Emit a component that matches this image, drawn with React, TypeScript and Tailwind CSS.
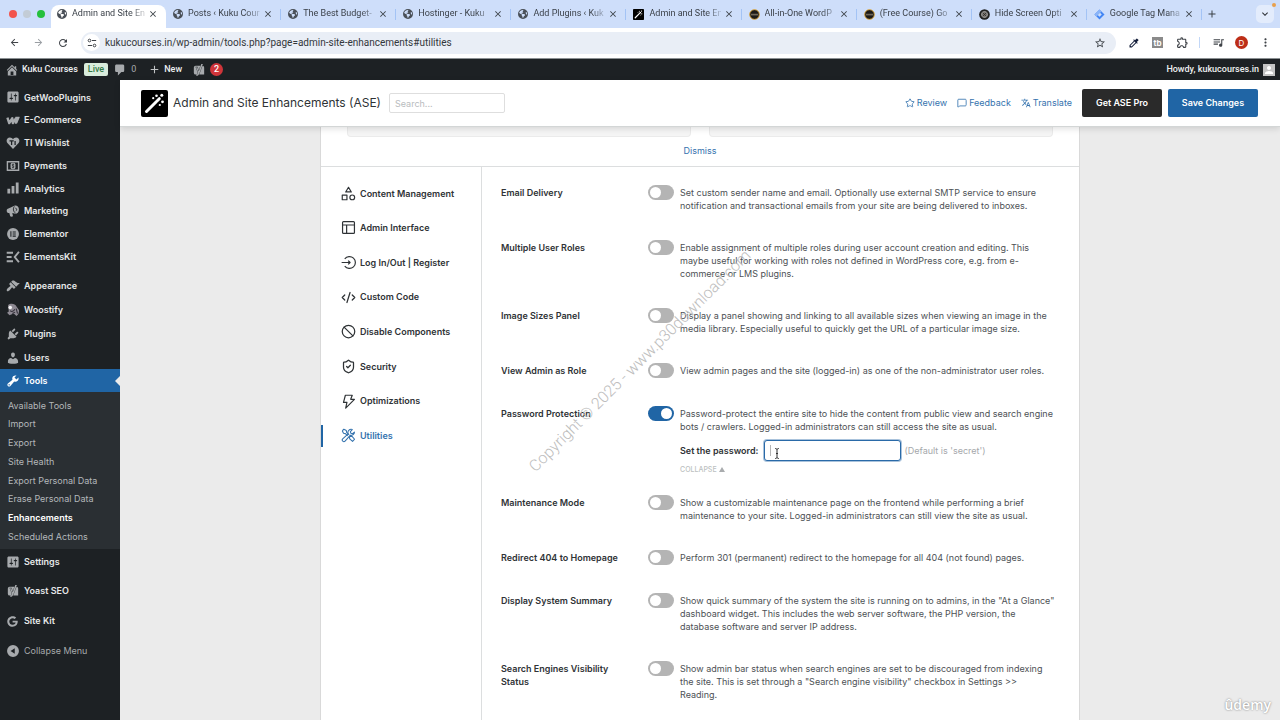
import type { ReactNode } from 'react';
import {
  MdAdd,
  MdArrowBack,
  MdArrowForward,
  MdClose,
  MdColorize,
  MdExpandMore,
  MdMoreVert,
  MdOutlineExtension,
  MdPerson,
  MdQueueMusic,
  MdRefresh,
  MdStarBorder,
  MdTranslate,
} from 'react-icons/md';
import { FaEarthAmericas, FaGoogle } from 'react-icons/fa6';
import { SiYoast } from 'react-icons/si';
import { Ban, CodeXml, MessageSquare, ShieldCheck, Star } from 'lucide-react';

/* ---------- drawings ---------- */

function Dash({ d, children }: { d?: string; children?: ReactNode }) {
  return (
    <svg viewBox="0 0 20 20" className="size-[14px] shrink-0" fill="currentColor" aria-hidden="true">
      {d ? <path d={d} fillRule="evenodd" /> : null}
      {children}
    </svg>
  );
}

const SLIDERS =
  'M18 16V4c0-1.1-.9-2-2-2H4c-1.1 0-2 .9-2 2v12c0 1.1.9 2 2 2h12c1.1 0 2-.9 2-2zM8 11h1c.55 0 1 .45 1 1s-.45 1-1 1H8v1.5c0 .28-.22.5-.5.5s-.5-.22-.5-.5V13H6c-.55 0-1-.45-1-1s.45-1 1-1h1V5.500c0-.28.22-.5.5-.5s.5.22.5.5V11zm5-2h-1c-.55 0-1-.45-1-1s.45-1 1-1h1V5.500c0-.28.22-.5.5-.5s.5.22.5.5V7h1c.55 0 1 .45 1 1s-.45 1-1 1h-1v5.500c0 .28-.22.5-.5.5s-.5-.22-.5-.5V9z';
const HOME =
  'M16 8.5l1.53 1.53-1.06 1.06L10 4.6l-6.47 6.49-1.06-1.06L10 2.5l4 4v-2h2v4zm-6-2.46l6 5.99V18H4v-5.97zM12 17v-5H8v5h4z';
const COMMENT = 'M5 2h9c1.1 0 2 .9 2 2v7c0 1.1-.9 2-2 2h-2l-5 5v-5H5c-1.1 0-2-.9-2-2V4c0-1.1.9-2 2-2z';
const BRUSH =
  'M14.48 11.06L7.41 3.99l1.5-1.5c.5-.56 2.3-.47 3.51.32 1.21.8 1.43 1.28 2.91 2.1 1.18.64 2.45 1.26 4.45.85zm-.71.71L6.7 4.7 4.93 6.47c-.39.39-.39 1.02 0 1.41l1.06 1.06c.39.39.39 1.03 0 1.42-.6.6-1.43 1.11-2.21 1.69-.35.26-.7.53-1.01.84C1.43 14.23.4 16.08 1.4 17.07c.99 1 2.84-.03 4.18-1.36.31-.31.58-.66.85-1.02.57-.78 1.08-1.61 1.69-2.21.39-.39 1.02-.39 1.41 0l1.06 1.06c.39.39 1.02.39 1.41 0z';
const PLUG =
  'M13.11 4.36L9.87 7.6 8 5.73l3.24-3.24c.35-.34 1.05-.2 1.56.32.52.51.66 1.21.31 1.55zm-8 1.77l.91-1.12 9.01 9.01-1.19.84c-.71.71-2.63 1.16-3.82 1.16H6.14L4.9 17.26c-.59.59-1.54.59-2.12 0-.59-.58-.59-1.53 0-2.12l1.24-1.24v-3.88c0-1.13.4-3.19 1.09-3.89zm7.26 3.97l3.24-3.24c.34-.35 1.04-.21 1.55.31.52.51.66 1.21.31 1.55l-3.24 3.25z';
const USER =
  'M10 9.25c-2.27 0-2.73-3.44-2.73-3.44C7 4.02 7.82 2 9.97 2c2.16 0 2.98 2.02 2.71 3.81 0 0-.41 3.44-2.68 3.44zm0 2.57L12.72 10c2.39 0 4.52 2.33 4.52 4.53v2.49s-3.65 1.13-7.24 1.13c-3.65 0-7.24-1.13-7.24-1.13v-2.49c0-2.25 1.94-4.48 4.47-4.48z';
const WRENCH =
  'M16.68 9.77c-1.34 1.34-3.3 1.67-4.95.99l-5.41 6.52c-.99.99-2.59.99-3.58 0s-.99-2.59 0-3.57l6.52-5.42c-.68-1.65-.35-3.61.99-4.95 1.28-1.28 3.12-1.62 4.72-1.06l-2.89 2.89 2.82 2.82 2.86-2.87c.53 1.58.18 3.39-1.08 4.65zM3.81 16.21c.4.39 1.04.39 1.43 0 .4-.4.4-1.04 0-1.43-.39-.4-1.03-.4-1.43 0-.39.39-.39 1.03 0 1.43z';

const wooIcon = (
  <Dash>
    <path
      d="M2 6.5l2.6 8 4.4-7 .8 7 4.7-7.6"
      fill="none"
      stroke="currentColor"
      strokeWidth="3.4"
      strokeLinejoin="round"
    />
    <path d="M13.5 5.2h5.3c.7 0 1 .5.7 1.1l-3.2 8c-.3.6-.8.9-1.4.9h-2.4z" />
  </Dash>
);
const wishIcon = (
  <Dash>
    <path d="M10 18.5L2 10C-.5 6.500 1.500 2 5.500 2 7.500 2 9 3 10 4.500 11 3 12.500 2 14.500 2c4 0 6 4.500 3.500 8z" />
    <path d="M5 7h6M8 7v6M13 7v6" stroke="#1d2124" strokeWidth="1.800" />
  </Dash>
);
const payIcon = (
  <Dash>
    <path d="M1 3h18v14H1zM3 5v10h14V5z" fillRule="evenodd" />
    <rect x="6.500" y="5.500" width="7" height="9" rx="2.500" />
    <path d="M11.600 8c-2.500-1.200-4 .8-1.600 1.800s1.500 3.200-1.500 2M10 6.500v7" stroke="#1d2124" fill="none" />
  </Dash>
);
const barsIcon = (
  <Dash>
    <path d="M2 11h4v7H2zM8 7h4v11H8zM14 2h4v16h-4z" />
  </Dash>
);
const hornIcon = (
  <Dash>
    <path d="M1 9.500C1 8 2 7 3.500 6.600L12 2.500c3-1 6.500 1.500 6.500 5.500s-2.500 6-5 6L9 13l1 4.500c-1.500 1-3 .8-4 0L4.700 12.800C2.500 13 1 11.500 1 9.500z" />
    <path
      d="M12 3.500c-2.500 3-1.500 7.500 1.500 9.500M13.500 6c2.200 0 2.200 3.500.5 3.800"
      fill="none"
      stroke="#1d2124"
      strokeWidth="1.300"
    />
  </Dash>
);
const elementorIcon = (
  <Dash>
    <circle cx="10" cy="10" r="8.500" />
    <path d="M7 6v8M9.500 7h4.500M9.500 10h4.500M9.500 13h4.500" stroke="#1d2124" strokeWidth="1.500" />
  </Dash>
);
const kitIcon = (
  <Dash>
    <path d="M1 4h9M1 10h7M1 16h9" stroke="currentColor" strokeWidth="2.800" />
    <path d="M18.500 2.500L12.500 10l6 7.500" fill="none" stroke="currentColor" strokeWidth="2.800" />
  </Dash>
);
const woostifyIcon = (
  <Dash>
    <path d="M3 3c4-3.500 10-2 12 2l3.500 5c.5 4-1 7-3.500 8.500L11 15 5 17.500 1.500 14 4 12z" fill="#8d8992" />
    <circle cx="6" cy="6.500" r="2.600" fill="#f4f4f6" />
    <path d="M6 11c2 2 5 1 6.500-2M9 15l4-2M14.500 8l2 7" stroke="#33303a" strokeWidth="1.500" fill="none" />
  </Dash>
);
const collapseIcon = (
  <Dash>
    <path d="M10 1.500a8.500 8.500 0 100 17 8.500 8.500 0 000-17zM12.500 6v8L6.500 10z" fillRule="evenodd" />
  </Dash>
);

function Wand({ className }: { className: string }) {
  return (
    <svg viewBox="0 0 27 27" className={className} aria-hidden="true">
      <rect width="27" height="27" rx="2" fill="#000" />
      <path d="M5.500 21.500L15.500 11.500" stroke="#fff" strokeWidth="3" strokeLinecap="round" />
      <path d="M16.500 10.500l1.800-1.800" stroke="#fff" strokeWidth="3" strokeLinecap="round" />
      <g fill="#fff">
        <circle cx="15.500" cy="5.700" r="1.300" />
        <circle cx="20.800" cy="5.200" r="1.500" />
        <circle cx="12.200" cy="8.200" r="1.100" />
        <circle cx="21.500" cy="11.800" r="1.400" />
        <circle cx="18.800" cy="15" r="1.100" />
      </g>
    </svg>
  );
}

function Outline({ children }: { children: ReactNode }) {
  return (
    <svg
      viewBox="0 0 24 24"
      className="size-[15px] shrink-0"
      fill="none"
      stroke="currentColor"
      strokeWidth="1.900"
      strokeLinejoin="round"
      aria-hidden="true"
    >
      {children}
    </svg>
  );
}

/* ---------- browser chrome ---------- */

const globe = <FaEarthAmericas className="size-[10px] shrink-0 text-[#4a5058]" />;
const badge = (
  <svg viewBox="0 0 12 12" className="size-[11px] shrink-0" aria-hidden="true">
    <circle cx="6" cy="6" r="5.300" fill="#1d1a17" stroke="#e0a83a" />
    <path d="M2 5.200h8v1.800H2z" fill="#6f675a" />
  </svg>
);
const target = (
  <svg viewBox="0 0 12 12" className="size-[11px] shrink-0" aria-hidden="true">
    <circle cx="6" cy="6" r="5.800" fill="#1f1f1f" />
    <circle cx="6" cy="6" r="3.300" fill="#77736f" stroke="#c9c9c9" strokeWidth=".7" />
    <path d="M4 4l4 4M8 4L4 8" stroke="#2a2a2a" strokeWidth=".9" />
  </svg>
);
const gtm = (
  <svg viewBox="0 0 12 12" className="size-[11px] shrink-0" aria-hidden="true">
    <path d="M6 .5L11.500 6 6 11.500.5 6z" fill="#4285f4" />
    <path d="M6 3.500L8.500 6 6 8.500 3.500 6z" fill="#cfe0fb" />
    <path d="M6 .5L.5 6l2.200 2.200L8.200 2.700z" fill="#8ab4f8" />
  </svg>
);

const TABS: { title: string; icon: ReactNode }[] = [
  { title: 'Admin and Site En', icon: globe },
  { title: 'Posts ‹ Kuku Cour', icon: globe },
  { title: 'The Best Budget-', icon: globe },
  { title: 'Hostinger - Kuku', icon: globe },
  { title: 'Add Plugins ‹ Kuk', icon: globe },
  { title: 'Admin and Site En', icon: <Wand className="size-[11px] shrink-0" /> },
  { title: 'All-in-One WordP', icon: badge },
  { title: '(Free Course) Go', icon: badge },
  { title: 'Hide Screen Opti', icon: target },
  { title: 'Google Tag Mana', icon: gtm },
];

function TabStrip() {
  return (
    <div className="flex h-7 items-center bg-[#cedefa]">
      <div className="flex w-[51px] shrink-0 items-center gap-[6px] pl-[9px]">
        <span className="size-2 rounded-full bg-[#f2544d]" />
        <span className="size-2 rounded-full bg-[#c3ccd6]" />
        <span className="size-2 rounded-full bg-[#25c03c]" />
      </div>
      <div className="flex h-full min-w-0 flex-1">
        {TABS.map((t, i) => (
          <div key={i} className="flex min-w-0 flex-1 flex-col pt-[5px]">
            <div
              className={
                i === 0
                  ? 'flex flex-1 items-center rounded-t-lg bg-white pr-2 pb-[5px] pl-[6px]'
                  : 'flex flex-1 items-center pb-[5px] pl-[7px]'
              }
            >
              {t.icon}
              <span className="ml-[5px] min-w-0 flex-1 overflow-hidden font-[Roboto,sans-serif] whitespace-nowrap text-[#3b4149] [mask-image:linear-gradient(to_right,#000_80%,rgba(0,0,0,0.2))]">
                {t.title}
              </span>
              <button type="button" aria-label="Close tab" className="ml-[3px] text-[#3b4046]">
                <MdClose className="size-[10px]" />
              </button>
              {i > 0 ? <span className="ml-[7px] h-[11px] w-px bg-[#a3c3f5]" /> : null}
            </div>
          </div>
        ))}
      </div>
      <button type="button" aria-label="New tab" className="ml-1 text-[#3b4046]">
        <MdAdd className="size-3" />
      </button>
      <button
        type="button"
        aria-label="Search tabs"
        className="relative mr-[6px] ml-[38px] flex size-[18px] items-center justify-center rounded-[5px] bg-[#e3ecfc] text-[#2f3338]"
      >
        <MdExpandMore className="size-3" />
        <span className="absolute -top-[2px] -right-[2px] size-1 rounded-full bg-[#e8a04c]" />
      </button>
    </div>
  );
}

function Toolbar() {
  return (
    <div className="flex h-[31px] items-center border-b border-[#8b9093] bg-white pb-px text-[#3f4348]">
      <button type="button" aria-label="Back" className="ml-[9px]">
        <MdArrowBack className="size-[11px]" />
      </button>
      <button type="button" aria-label="Forward" className="ml-[13px] text-[#9a9ea3]">
        <MdArrowForward className="size-[11px]" />
      </button>
      <button type="button" aria-label="Reload" className="ml-[13px]">
        <MdRefresh className="size-3" />
      </button>
      <div className="ml-3 flex h-[22px] min-w-0 flex-1 items-center rounded-full bg-[#e9eef6] pr-[10px] pl-[2px]">
        <span className="flex size-[17px] shrink-0 items-center justify-center rounded-full bg-white">
          <svg viewBox="0 0 12 12" className="size-[10px]" fill="none" stroke="currentColor" strokeWidth="1.200" aria-hidden="true">
            <circle cx="3" cy="3" r="1.600" />
            <path d="M6 3h5M1 9h5" />
            <circle cx="9" cy="9" r="1.600" />
          </svg>
        </span>
        <input
          type="text"
          aria-label="Address"
          defaultValue="kukucourses.in/wp-admin/tools.php?page=admin-site-enhancements#utilities"
          className="ml-[5px] min-w-0 flex-1 bg-transparent font-[Roboto,sans-serif] text-[10px] text-[#33373b] outline-none"
        />
        <MdStarBorder className="size-3" />
      </div>
      <div className="flex items-center pl-3">
        <MdColorize className="size-3 text-[#16203c]" />
        <span className="ml-3 flex h-[11px] w-[11px] items-center justify-center bg-[#8a8a8a] text-[8px] leading-none font-bold text-white">
          tb
        </span>
        <MdOutlineExtension className="ml-[13px] size-[13px]" />
        <span className="ml-[10px] h-[11px] w-px bg-[#c2d7f7]" />
        <MdQueueMusic className="ml-3 size-[13px]" />
        <span className="ml-[10px] flex size-[13px] items-center justify-center rounded-full bg-[#bd2e17] text-[8px] leading-none text-white">
          D
        </span>
        <MdMoreVert className="mr-2 ml-[11px] size-[13px]" />
      </div>
    </div>
  );
}

/* ---------- WordPress shell ---------- */

function AdminBar() {
  return (
    <div className="flex h-[21px] items-center bg-[#1d2124] pr-[5px] pl-[5px] font-[Roboto,sans-serif] font-medium text-[#eef0f1]">
      <span className="text-[#a7aaad]">
        <Dash d={HOME} />
      </span>
      <a href="#site" className="ml-[3px]">
        Kuku Courses
      </a>
      <span className="ml-[6px] rounded-[2px] bg-[#d9ecdc] px-1 leading-[13px] text-[#357a46]">Live</span>
      <span className="ml-[5px] text-[#a7aaad]">
        <Dash d={COMMENT} />
      </span>
      <span className="ml-1 font-normal text-[#a7aaad]">0</span>
      <MdAdd className="ml-3 size-[13px] text-[#c0c3c5]" />
      <a href="#new" className="ml-[3px]">
        New
      </a>
      <SiYoast className="ml-[11px] size-3 text-[#a7aaad]" />
      <span className="ml-[5px] flex size-[13px] items-center justify-center rounded-full bg-[#d0353a] leading-none text-white">
        2
      </span>
      <a href="#profile" className="ml-auto">
        Howdy, kukucourses.in
      </a>
      <span className="ml-1 flex size-3 items-end justify-center bg-[#c4c4c4] text-white">
        <MdPerson className="size-3" />
      </span>
    </div>
  );
}

type MenuItem = { label: string; icon: ReactNode };

const MENU_TOP: MenuItem[] = [
  { label: 'GetWooPlugins', icon: <Dash d={SLIDERS} /> },
  { label: 'E-Commerce', icon: wooIcon },
  { label: 'TI Wishlist', icon: wishIcon },
  { label: 'Payments', icon: payIcon },
  { label: 'Analytics', icon: barsIcon },
  { label: 'Marketing', icon: hornIcon },
  { label: 'Elementor', icon: elementorIcon },
  { label: 'ElementsKit', icon: kitIcon },
];
const MENU_MID: MenuItem[] = [
  { label: 'Appearance', icon: <Dash d={BRUSH} /> },
  { label: 'Woostify', icon: woostifyIcon },
  { label: 'Plugins', icon: <Dash d={PLUG} /> },
];
const MENU_END: MenuItem[] = [
  { label: 'Yoast SEO', icon: <SiYoast className="size-3" /> },
  { label: 'Site Kit', icon: <FaGoogle className="size-[11px]" /> },
];
const TOOLS = [
  'Available Tools',
  'Import',
  'Export',
  'Site Health',
  'Export Personal Data',
  'Erase Personal Data',
  'Enhancements',
  'Scheduled Actions',
];

function MenuLink({ item, height }: { item: MenuItem; height: string }) {
  return (
    <a href="#menu" className={`flex items-center gap-1 pl-[5px] ${height}`}>
      <span className="flex w-[15px] justify-center text-[#a7aaad]">{item.icon}</span>
      {item.label}
    </a>
  );
}

function Sidebar() {
  return (
    <nav className="flex w-[120px] shrink-0 flex-col bg-[#1d2124] pt-[6px] font-semibold text-[#e6e8e9]">
      <div className="grid h-[182px] shrink-0 grid-rows-8">
        {MENU_TOP.map((m) => (
          <MenuLink key={m.label} item={m} height="h-full" />
        ))}
      </div>
      <div className="mt-[6px]">
        {MENU_MID.map((m) => (
          <MenuLink key={m.label} item={m} height="h-6" />
        ))}
        <MenuLink item={{ label: 'Users', icon: <Dash d={USER} /> }} height="h-[23px]" />
      </div>
      <a href="#tools" className="flex h-[23px] shrink-0 items-center gap-1 bg-[#2065a5] pl-[5px] text-white">
        <span className="flex w-[15px] justify-center">
          <Dash d={WRENCH} />
        </span>
        Tools
        <svg viewBox="0 0 5 10" className="ml-auto h-[10px] w-[5px]" aria-hidden="true">
          <path d="M5 0v10L0 5z" fill="#ebebeb" />
        </svg>
      </a>
      <div className="grid h-[157px] shrink-0 grid-rows-8 bg-[#2a2f33] pt-1 pb-[3px] font-normal text-[#b4b8bb]">
        {TOOLS.map((t) => (
          <a
            key={t}
            href="#submenu"
            className={t === 'Enhancements' ? 'flex items-center pl-2 font-semibold text-white' : 'flex items-center pl-2'}
          >
            {t}
          </a>
        ))}
      </div>
      <MenuLink item={{ label: 'Settings', icon: <Dash d={SLIDERS} /> }} height="h-[25px]" />
      <div className="mt-[2px]">
        {MENU_END.map((m) => (
          <MenuLink key={m.label} item={m} height="h-[30px]" />
        ))}
      </div>
      <button type="button" className="flex h-[30px] items-center gap-1 pl-[5px] font-normal text-[#a7aaad]">
        <span className="flex w-[15px] justify-center">{collapseIcon}</span>
        Collapse Menu
      </button>
    </nav>
  );
}

function PageHeader() {
  return (
    <header className="relative flex h-[47px] shrink-0 items-center border-b border-[#d3d6d6] bg-white pr-[22px] pl-[21px] shadow-[0_2px_6px_rgba(0,0,0,0.12)]">
      <Wand className="size-[27px] shrink-0" />
      <h1 className="ml-[5px] text-[12px] text-[#2f3336]">Admin and Site Enhancements (ASE)</h1>
      <input
        type="search"
        aria-label="Search"
        placeholder="Search..."
        className="ml-2 h-5 w-[116px] rounded-[2px] border border-[#dedede] bg-white px-[5px] outline-none placeholder:text-[#b9bcbe]"
      />
      <div className="ml-auto flex items-center gap-[10px] text-[#3573ae]">
        <a href="#review" className="flex items-center gap-[2px]">
          <Star className="size-[10px]" />
          Review
        </a>
        <a href="#feedback" className="flex items-center gap-[2px]">
          <MessageSquare className="size-[10px]" />
          Feedback
        </a>
        <a href="#translate" className="flex items-center gap-[2px]">
          <MdTranslate className="size-[10px]" />
          Translate
        </a>
      </div>
      <button type="button" className="ml-[10px] h-7 w-20 rounded-[2px] bg-[#2a2a2a] font-semibold text-white">
        Get ASE Pro
      </button>
      <button type="button" className="ml-[6px] h-7 w-[90px] rounded-[2px] bg-[#2065a5] font-semibold text-white">
        Save Changes
      </button>
    </header>
  );
}

/* ---------- settings ---------- */

const SECTIONS: MenuItem[] = [
  {
    label: 'Content Management',
    icon: (
      <Outline>
        <path d="M12 2l4.500 7.500h-9zM2 14.500h7.500V22H2z" />
        <circle cx="18" cy="18.200" r="3.800" />
      </Outline>
    ),
  },
  {
    label: 'Admin Interface',
    icon: (
      <Outline>
        <rect x="2.500" y="2.500" width="19" height="19" rx="1.500" />
        <path d="M2.500 8h19M9 8v13.500" />
      </Outline>
    ),
  },
  {
    label: 'Log In/Out | Register',
    icon: (
      <Outline>
        <path d="M6 6.200a9.500 9.500 0 11 0 11.600M1 12h13.500M11.500 9l3 3-3 3" />
      </Outline>
    ),
  },
  { label: 'Custom Code', icon: <CodeXml className="size-[15px]" /> },
  { label: 'Disable Components', icon: <Ban className="size-[15px]" /> },
  { label: 'Security', icon: <ShieldCheck className="size-[15px]" /> },
  {
    label: 'Optimizations',
    icon: (
      <Outline>
        <path d="M7 2h11l-2.500 6.500h6L7.500 22.500l2-9H4z" />
      </Outline>
    ),
  },
  {
    label: 'Utilities',
    icon: (
      <Outline>
        <path
          strokeWidth="1.700"
          d="M2 4.500L4.500 2l4 2 .5 3 4 4M2 4.500l2 4 3 .5 3.700 3.700M13.500 14.500l1.200-1.200 3 .2 4 4.500-3.200 3.500-4.500-4z"
        />
        <path
          strokeWidth="1.700"
          d="M21.500 6.500a5 5 0 01-6.500 5L6.500 21a2.500 2.500 0 01-3.800-3.500l8.800-8a5.200 5.200 0 016.500-7l-3 3.200.8 2.800 2.700.7z"
        />
      </Outline>
    ),
  },
];

type Setting = { label: string; text: string; password?: boolean };

const SETTINGS: Setting[] = [
  {
    label: 'Email Delivery',
    text: 'Set custom sender name and email. Optionally use external SMTP service to ensure notification and transactional emails from your site are being delivered to inboxes.',
  },
  {
    label: 'Multiple User Roles',
    text: 'Enable assignment of multiple roles during user account creation and editing. This maybe useful for working with roles not defined in WordPress core, e.g. from e-commerce or LMS plugins.',
  },
  {
    label: 'Image Sizes Panel',
    text: 'Display a panel showing and linking to all available sizes when viewing an image in the media library. Especially useful to quickly get the URL of a particular image size.',
  },
  {
    label: 'View Admin as Role',
    text: 'View admin pages and the site (logged-in) as one of the non-administrator user roles.',
  },
  {
    label: 'Password Protection',
    text: 'Password-protect the entire site to hide the content from public view and search engine bots / crawlers. Logged-in administrators can still access the site as usual.',
    password: true,
  },
  {
    label: 'Maintenance Mode',
    text: 'Show a customizable maintenance page on the frontend while performing a brief maintenance to your site. Logged-in administrators can still view the site as usual.',
  },
  {
    label: 'Redirect 404 to Homepage',
    text: 'Perform 301 (permanent) redirect to the homepage for all 404 (not found) pages.',
  },
  {
    label: 'Display System Summary',
    text: 'Show quick summary of the system the site is running on to admins, in the "At a Glance" dashboard widget. This includes the web server software, the PHP version, the database software and server IP address.',
  },
  {
    label: 'Search Engines Visibility Status',
    text: 'Show admin bar status when search engines are set to be discouraged from indexing the site. This is set through a "Search engine visibility" checkbox in Settings >> Reading.',
  },
];

function SettingRow({ s, id }: { s: Setting; id: string }) {
  return (
    <div className={s.password ? 'flex items-start pb-5' : 'flex items-start pb-7'}>
      <label htmlFor={id} className="w-[147px] shrink-0 pt-px pr-4 leading-[13px] font-semibold text-[#2f3336]">
        {s.label}
      </label>
      <input
        id={id}
        type="checkbox"
        defaultChecked={s.password}
        className="flex h-[15px] w-[26px] shrink-0 appearance-none items-center rounded-full bg-[#b4b4b4] px-[2px] before:size-[11px] before:rounded-full before:bg-white before:content-[''] checked:justify-end checked:bg-[#2065a5]"
      />
      <div className="ml-[6px] min-w-0 flex-1 pt-px leading-[13px] text-[#4d5155]">
        <p>{s.text}</p>
        {s.password ? (
          <>
            <div className="mt-[7px] flex items-center">
              <label htmlFor="site-password" className="font-semibold text-[#2f3336]">
                Set the password:
              </label>
              <div className="relative ml-[6px]">
                <input
                  id="site-password"
                  type="text"
                  className="block h-[21px] w-[137px] rounded-[3px] border border-[#2a6aa8] bg-white px-[6px] ring-1 ring-[#2a6aa8]/40 outline-none"
                />
                <span className="absolute top-[5px] left-[6px] h-[11px] w-px bg-[#b5b5b5]" />
                <svg viewBox="0 0 6 11" className="absolute top-[8px] left-[10px] h-[11px] w-[6px]" aria-hidden="true">
                  <path d="M1 .5c1 0 2 .3 2 1.300v7.400c0 1-1 1.300-2 1.300M5 .5c-1 0-2 .3-2 1.300M5 10.500c-1 0-2-.3-2-1.300M2 5.500h2" fill="none" stroke="#333" />
                </svg>
              </div>
              <span className="ml-[3px] text-[#a5a8ab]">(Default is 'secret')</span>
            </div>
            <button type="button" className="mt-[2px] flex h-3 items-center gap-[2px] text-[7px] font-medium text-[#bcbfc1]">
              COLLAPSE
              <svg viewBox="0 0 6 5" className="h-[5px] w-[6px]" aria-hidden="true">
                <path d="M3 0l3 5H0z" fill="#a9acae" />
              </svg>
            </button>
          </>
        ) : null}
      </div>
    </div>
  );
}

function SettingsPanel() {
  return (
    <section className="mx-auto flex min-h-0 w-full max-w-[760px] flex-1 flex-col border-x border-[#d9d9d9] bg-white">
      <div className="flex flex-col border-b border-[#dcdedf] px-[26px] pb-2">
        <div className="grid grid-cols-2 gap-[18px]">
          <div className="h-[10px] rounded-b-[4px] border border-t-0 border-[#ebebeb] bg-[#f5f5f5]" />
          <div className="h-[10px] rounded-b-[4px] border border-t-0 border-[#ebebeb] bg-[#f5f5f5]" />
        </div>
        <a href="#dismiss" className="mt-[7px] self-center leading-[14px] text-[#3573ae]">
          Dismiss
        </a>
      </div>
      <div className="flex min-h-0 flex-1">
        <nav className="w-[161px] shrink-0 border-r border-[#dcdedf] pt-[9px]">
          <div className="grid h-[277px] grid-rows-8 font-semibold text-[#2f3336]">
            {SECTIONS.map((s) => {
              const active = s.label === 'Utilities';
              return (
                <a key={s.label} href="#section" className={active ? 'flex items-center text-[#3573ae]' : 'flex items-center'}>
                  <span className={active ? 'h-[22px] w-[2px] bg-[#2065a5]' : 'h-[22px] w-[2px]'} />
                  <span className="mr-1 ml-[18px]">{s.icon}</span>
                  {s.label}
                </a>
              );
            })}
          </div>
        </nav>
        <div className="min-w-0 flex-1 overflow-hidden pt-[18px] pr-6 pl-[19px]">
          {SETTINGS.map((s, i) => (
            <SettingRow key={s.label} s={s} id={`setting-${i}`} />
          ))}
        </div>
      </div>
    </section>
  );
}

export default function App() {
  return (
    <div className="relative flex h-screen flex-col overflow-hidden bg-[#ebebeb] font-[Inter,sans-serif] text-[9px]">
      <TabStrip />
      <Toolbar />
      <AdminBar />
      <div className="flex min-h-0 flex-1">
        <Sidebar />
        <main className="flex min-w-0 flex-1 flex-col">
          <PageHeader />
          <SettingsPanel />
        </main>
      </div>
      <div className="pointer-events-none absolute top-[351px] left-[480px] w-[320px] -rotate-45 text-center font-[Roboto,sans-serif] text-[16px] leading-5 font-light whitespace-nowrap text-[#bdbdbd]">
        Copyright © 2025 - www.p30download.com
      </div>
      <div className="pointer-events-none absolute right-[9px] bottom-[6px] font-['Open_Sans',sans-serif] text-[14px] leading-[18px] font-semibold text-white [text-shadow:0_0_2px_#707070]">
        ûdemy
      </div>
    </div>
  );
}
